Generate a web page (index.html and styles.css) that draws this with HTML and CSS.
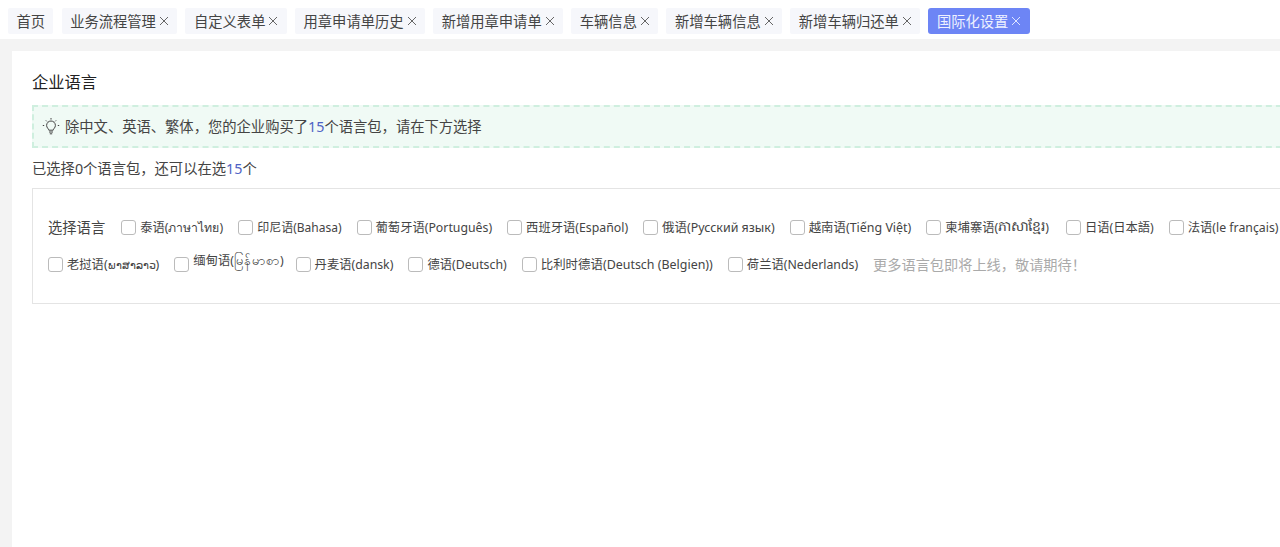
FILE: index.html
```html
<!DOCTYPE html>
<html lang="zh-CN">
<head>
<meta charset="utf-8">
<title>企业语言</title>
<link rel="stylesheet" href="styles.css">
</head>
<body>
<nav class="tabs">
  <a class="tab">首页</a>
  <a class="tab">业务流程管理<svg class="x" viewBox="0 0 10 10"><path d="M1 1l8 8M9 1l-8 8"/></svg></a>
  <a class="tab">自定义表单<svg class="x" viewBox="0 0 10 10"><path d="M1 1l8 8M9 1l-8 8"/></svg></a>
  <a class="tab">用章申请单历史<svg class="x" viewBox="0 0 10 10"><path d="M1 1l8 8M9 1l-8 8"/></svg></a>
  <a class="tab">新增用章申请单<svg class="x" viewBox="0 0 10 10"><path d="M1 1l8 8M9 1l-8 8"/></svg></a>
  <a class="tab">车辆信息<svg class="x" viewBox="0 0 10 10"><path d="M1 1l8 8M9 1l-8 8"/></svg></a>
  <a class="tab">新增车辆信息<svg class="x" viewBox="0 0 10 10"><path d="M1 1l8 8M9 1l-8 8"/></svg></a>
  <a class="tab">新增车辆归还单<svg class="x" viewBox="0 0 10 10"><path d="M1 1l8 8M9 1l-8 8"/></svg></a>
  <a class="tab active">国际化设置<svg class="x" viewBox="0 0 10 10"><path d="M1 1l8 8M9 1l-8 8"/></svg></a>
</nav>
<main class="main">
  <section class="card">
    <h1 class="title">企业语言</h1>
    <div class="alert">
      <svg class="bulb" viewBox="0 0 18 18"><path d="M9 1v1.6M2.2 8.5H.8M17.2 8.5h-1.4M3.9 3.4l1 1M14.1 3.4l-1 1M6.8 13.2c0-1.5-2.2-2.2-2.2-4.8a4.4 4.4 0 0 1 8.8 0c0 2.6-2.2 3.3-2.2 4.8zM7 15h4M7.8 16.8h2.4"/></svg>
      <span>除中文、英语、繁体，您的企业购买了<b class="num">15</b>个语言包，请在下方选择</span>
    </div>
    <p class="count">已选择0个语言包，还可以在选<b class="num">15</b>个</p>
    <div class="picker">
      <div class="row">
        <span class="label">选择语言</span>
        <label class="opt"><i class="box"></i>泰语(ภาษาไทย)</label>
        <label class="opt tight"><i class="box"></i>印尼语(Bahasa)</label>
        <label class="opt"><i class="box"></i>葡萄牙语(Português)</label>
        <label class="opt"><i class="box"></i>西班牙语(Español)</label>
        <label class="opt wide"><i class="box"></i>俄语(Русский язык)</label>
        <label class="opt wide"><i class="box"></i>越南语(Tiếng Việt)</label>
        <label class="opt km"><i class="box"></i>柬埔寨语(<span class="khmer">ភាសាខ្មែរ</span>)</label>
        <label class="opt"><i class="box"></i>日语(日本語)</label>
        <label class="opt"><i class="box"></i>法语(le français)</label>
      </div>
      <div class="row">
        <label class="opt"><i class="box"></i>老挝语(<span class="lao">ພາສາລາວ</span>)</label>
        <label class="opt mm"><i class="box"></i><span class="raised">缅甸语(<span class="myanmar">မြန်မာစာ</span>)</span></label>
        <label class="opt"><i class="box"></i>丹麦语(dansk)</label>
        <label class="opt"><i class="box"></i>德语(Deutsch)</label>
        <label class="opt wide"><i class="box"></i>比利时德语(Deutsch (Belgien))</label>
        <label class="opt"><i class="box"></i>荷兰语(Nederlands)</label>
        <span class="more">更多语言包即将上线，敬请期待！</span>
      </div>
    </div>
  </section>
</main>
</body>
</html>
```

FILE: styles.css
```css
* { box-sizing: border-box; }
html, body { height: 100%; }
body {
  margin: 0;
  overflow: hidden;
  display: flex;
  flex-direction: column;
  background: #f3f3f3;
  color: #333;
  font-family: "Noto Sans", "Noto Sans CJK SC", sans-serif;
  font-size: 14.3px;
}
.tabs {
  flex: none;
  height: 39px;
  background: #fff;
  display: flex;
  gap: 8.3px;
  padding: 8px 0 0 8px;
  align-items: flex-start;
}
.tab {
  height: 26px;
  padding: 0 8.25px 0 8.5px;
  background: #f6f7fb;
  border-radius: 2px;
  display: flex;
  align-items: center;
  gap: 2px;
  line-height: 25px;
  color: #444;
}
.tab.active {
  background: #6d85f5;
  color: #eef1ff;
  border-radius: 3px;
}
.x {
  width: 10px;
  height: 10px;
  fill: none;
  stroke: #666;
  stroke-width: 1;
  margin-left: 1px;
}
.active .x { stroke: #dfe5ff; }
.main {
  flex: 1;
  margin-top: 12px;
  padding-left: 12px;
  min-height: 0;
}
.card {
  width: 1320px;
  height: 100%;
  background: #fff;
  padding: 19px 20px 20px;
}
.title {
  margin: 0;
  font-size: 16.3px;
  font-weight: 400;
  line-height: 24px;
  color: #222;
}
.alert {
  margin-top: 11px;
  height: 43px;
  background: #f0faf5;
  border: 2px dashed #cfefdf;
  display: flex;
  align-items: center;
  padding: 0 0 2px 8px;
  gap: 5px;
  color: #444;
}
.bulb {
  width: 18px;
  height: 18px;
  fill: none;
  stroke: #444;
  stroke-width: 1;
}
.num {
  font-weight: 400;
  color: #4c62c4;
}
.count {
  margin: 10px 0 0;
  line-height: 22px;
  color: #444;
}
.picker {
  margin-top: 8px;
  height: 116px;
  border: 1px solid #e4e4e4;
  padding: 27px 15px 0;
  display: flex;
  flex-direction: column;
  gap: 15px;
}
.row {
  display: flex;
  align-items: center;
  height: 22px;
  white-space: nowrap;
}
.label {
  margin-right: 16px;
  padding-bottom: 2px;
  color: #444;
}
.opt {
  display: flex;
  align-items: center;
  margin-right: 15px;
  font-size: 12.3px;
  color: #444;
}
.opt.tight { font-size: 12px; }
.opt.wide { font-size: 12.45px; }
.opt.km { margin-right: 17px; }
.opt.mm { margin-right: 12px; }
.khmer { font-size: 14px; }
.lao { font-size: 10.8px; }
.myanmar { font-size: 12.9px; }
.raised { padding-bottom: 6px; }
.box {
  flex: none;
  width: 15px;
  height: 15px;
  margin-right: 4px;
  background: #fff;
  border: 1px solid #bbb;
  border-radius: 3px;
}
.more {
  color: #aaa;
  font-size: 14.2px;
}
```
